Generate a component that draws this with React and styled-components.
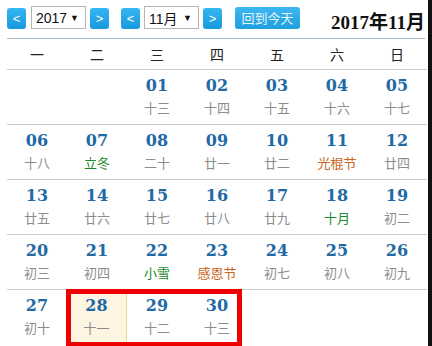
import React from "react";
import styled, { createGlobalStyle } from "styled-components";

const GlobalStyle = createGlobalStyle`
  html, body {
    margin: 0;
    padding: 0;
    background: #ffffff;
  }
`;

const Page = styled.div`
  position: relative;
  width: 432px;
  height: 346px;
  overflow: hidden;
  background: #ffffff;
  display: flex;
  font-family: "Liberation Sans", "Noto Sans CJK SC", sans-serif;
`;

const Calendar = styled.div`
  width: 428px;
  display: flex;
  flex-direction: column;
`;

const Edge = styled.div`
  width: 4px;
  background: #111111;
`;

const Toolbar = styled.div`
  height: 39px;
  box-sizing: border-box;
  margin-left: 7px;
  margin-right: 3px;
  padding-top: 6px;
  display: flex;
  align-items: flex-start;
  border-bottom: 1px solid #a7bfcf;
`;

const NavButton = styled.button`
  width: 19px;
  height: 21px;
  margin-top: 2px;
  margin-left: ${(p) => p.gap || 0}px;
  padding: 0;
  border: none;
  border-radius: 3px;
  background: linear-gradient(#34b6f2, #1799dd);
  color: #ffffff;
  font-family: "Liberation Sans", sans-serif;
  font-size: 13px;
  line-height: 21px;
  text-align: center;
`;

const Select = styled.div`
  width: 55px;
  height: 23px;
  margin-left: ${(p) => p.gap || 0}px;
  box-sizing: border-box;
  border: 1px solid #b5b5b5;
  display: flex;
  align-items: center;
  justify-content: space-between;
  padding: 0 6px 0 4px;
  font-family: "Liberation Sans", "Noto Sans CJK SC", sans-serif;
  font-size: 14px;
  color: #111111;
`;

const Caret = styled.span`
  font-size: 9px;
  color: #111111;
`;

const TodayButton = styled.button`
  width: 65px;
  height: 22px;
  margin-top: 1px;
  margin-left: 13px;
  padding: 0;
  border: none;
  border-radius: 3px;
  background: linear-gradient(#3db7f0, #1e9fe0);
  color: #e8f6ff;
  font-family: "Noto Sans CJK SC", sans-serif;
  font-size: 13px;
  line-height: 22px;
`;

const Title = styled.div`
  margin-left: auto;
  margin-top: 1px;
  font-family: "Liberation Serif", "Noto Sans CJK SC", serif;
  font-weight: bold;
  font-size: 19px;
  color: #111111;
`;

const Grid = styled.div`
  margin-left: 7px;
  margin-right: 3px;
  display: grid;
  grid-template-columns: repeat(7, 60px);
`;

const WeekCell = styled.div`
  height: 31px;
  box-sizing: border-box;
  border-bottom: 1px solid #cccccc;
  display: flex;
  align-items: center;
  justify-content: center;
  font-family: "Noto Sans CJK SC", sans-serif;
  font-size: 14px;
  color: #222222;
`;

const DayCell = styled.div`
  height: 55px;
  box-sizing: border-box;
  border-bottom: ${(p) => (p.last ? "none" : "1px solid #cccccc")};
  background: ${(p) => (p.today ? "#fdf4e2" : "transparent")};
  border-right: ${(p) => (p.today ? "1px solid #ecd38a" : "none")};
  display: flex;
  flex-direction: column;
  align-items: center;
  padding-top: 6px;
`;

const DayNum = styled.div`
  font-family: "DejaVu Serif", serif;
  font-weight: bold;
  font-size: 16px;
  line-height: 20px;
  color: #1f6aa5;
`;

const Lunar = styled.div`
  margin-top: 3px;
  font-family: "Noto Sans CJK SC", sans-serif;
  font-size: 13px;
  line-height: 18px;
  color: ${(p) =>
    p.kind === "term" ? "#1b8a2a" : p.kind === "fest" ? "#c8641b" : "#8c8c8c"};
`;

const Marker = styled.div`
  position: absolute;
  left: 66px;
  top: 289px;
  width: 176px;
  height: 58px;
  box-sizing: border-box;
  border: 5px solid #ee0000;
`;

const weekdays = ["一", "二", "三", "四", "五", "六", "日"];

const lunar = {
  1: "十三", 2: "十四", 3: "十五", 4: "十六", 5: "十七",
  6: "十八", 7: ["立冬", "term"], 8: "二十", 9: "廿一", 10: "廿二",
  11: ["光棍节", "fest"], 12: "廿四", 13: "廿五", 14: "廿六", 15: "廿七",
  16: "廿八", 17: "廿九", 18: ["十月", "term"], 19: "初二", 20: "初三",
  21: "初四", 22: ["小雪", "term"], 23: ["感恩节", "fest"], 24: "初七",
  25: "初八", 26: "初九", 27: "初十", 28: "十一", 29: "十二", 30: "十三",
};

const cells = [];
for (let i = 0; i < 2; i++) cells.push(null);
for (let d = 1; d <= 30; d++) cells.push(d);
while (cells.length % 7) cells.push(null);

export default function App() {
  const rows = cells.length / 7;
  return (
    <>
      <GlobalStyle />
      <Page>
        <Calendar>
          <Toolbar>
            <NavButton>&lt;</NavButton>
            <Select gap={5}>
              2017<Caret>▼</Caret>
            </Select>
            <NavButton gap={4}>&gt;</NavButton>
            <NavButton gap={12}>&lt;</NavButton>
            <Select gap={4}>
              11月<Caret>▼</Caret>
            </Select>
            <NavButton gap={4}>&gt;</NavButton>
            <TodayButton>回到今天</TodayButton>
            <Title>2017年11月</Title>
          </Toolbar>
          <Grid>
            {weekdays.map((w) => (
              <WeekCell key={w}>{w}</WeekCell>
            ))}
            {cells.map((d, i) => {
              const last = Math.floor(i / 7) === rows - 1;
              if (!d) return <DayCell key={i} last={last} />;
              const info = lunar[d];
              const [text, kind] = Array.isArray(info) ? info : [info, "plain"];
              return (
                <DayCell key={i} last={last} today={d === 28}>
                  <DayNum>{String(d).padStart(2, "0")}</DayNum>
                  <Lunar kind={kind}>{text}</Lunar>
                </DayCell>
              );
            })}
          </Grid>
        </Calendar>
        <Edge />
        <Marker />
      </Page>
    </>
  );
}
